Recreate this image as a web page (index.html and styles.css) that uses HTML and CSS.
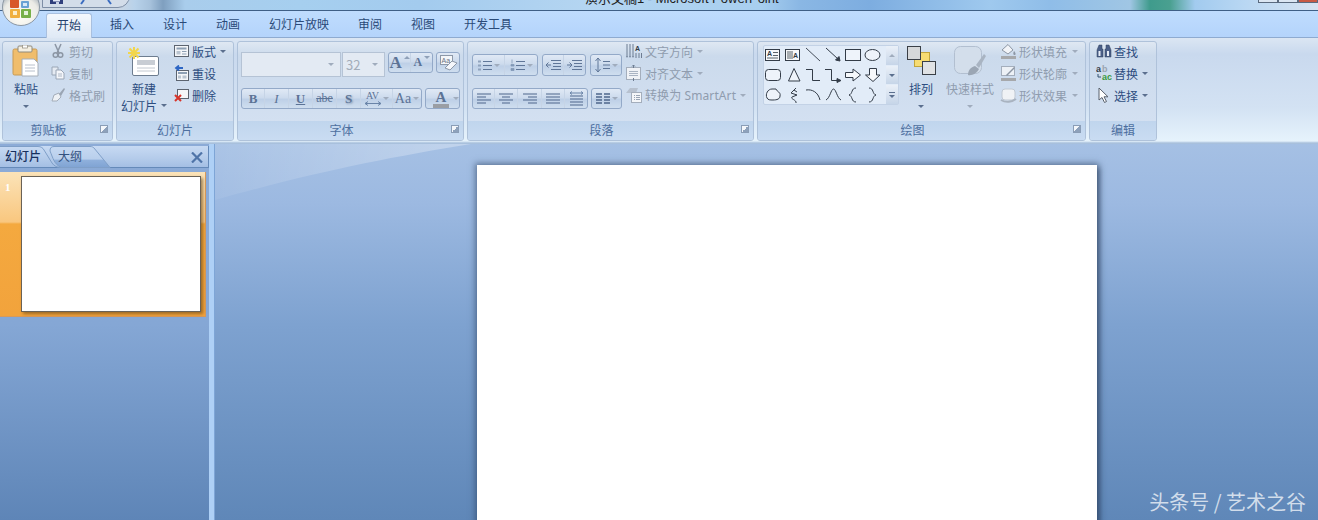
FILE: index.html
```html
<!DOCTYPE html>
<html lang="zh-CN">
<head>
<meta charset="utf-8">
<title>演示文稿1 - Microsoft PowerPoint</title>
<link rel="stylesheet" href="styles.css">
</head>
<body>
<div class="app">
  <header class="titlebar">
    <div class="qat">
      <svg class="qat-ico" width="66" height="6" viewBox="0 0 66 6"><rect x="0" y="0" width="13" height="4" fill="#2f3f7c"/><rect x="3" y="0" width="7" height="1.500" fill="#dfe6f4"/><rect x="6" y="2" width="3" height="2" fill="#c8d2e6"/><path d="M31 4 L34 0 M58 0 L61 4" stroke="#3a6cc0" stroke-width="2" fill="none"/></svg>
    </div>
    <div class="doc-title">演示文稿1 - Microsoft PowerPoint</div>
    <div class="winbtns"><i></i><i></i><i class="close"></i></div>
  </header>
  <svg class="orb" width="40" height="32" viewBox="0 0 40 32">
    <defs><radialGradient id="orbg" cx=".5" cy=".75" r=".7"><stop offset="0" stop-color="#fffdf6"/><stop offset=".7" stop-color="#ebebe6"/><stop offset="1" stop-color="#a3adb6"/></radialGradient></defs>
    <circle cx="20" cy="7" r="18.500" fill="url(#orbg)" stroke="#8b97a3"/>
    <rect x="9" y="-1" width="9" height="9" rx="1" fill="#d8582a"/>
    <rect x="20" y="1" width="8" height="7" rx="1" fill="#5a98d0" opacity=".9"/>
    <rect x="9" y="9" width="10" height="9" rx="1" fill="#f0b040"/>
    <rect x="20" y="9" width="10" height="9" rx="1" fill="#78b048"/>
    <rect x="12" y="11" width="4" height="4" fill="#fbeecb"/><rect x="23" y="11" width="4" height="4" fill="#e4f2d8"/><rect x="22" y="3" width="4" height="3" fill="#d8e8f6"/>
  </svg>
  <nav class="tabs">
    <span class="tab active">开始</span><span class="tab">插入</span><span class="tab">设计</span><span class="tab">动画</span><span class="tab">幻灯片放映</span><span class="tab">审阅</span><span class="tab">视图</span><span class="tab">开发工具</span>
  </nav>
  <section class="ribbon">
    <div class="group g1">
      <div class="gbody">
        <div class="big paste">
          <div class="big-ico"><svg width="28" height="32" viewBox="0 0 28 32"><rect x="1" y="4" width="24" height="26" rx="1.500" fill="#f0bd6c" stroke="#c79a55"/><rect x="6" y="1" width="14" height="6" rx="1" fill="#f4efe2" stroke="#8f8a7c"/><rect x="10.500" y="0" width="5" height="3" fill="#fff" stroke="#8f8a7c" stroke-width=".7"/><path d="M10 14 H22 L26 18 V31 H10Z" fill="#fff" stroke="#a6aeb8"/><path d="M13 20H23M13 23H23M13 26H23" stroke="#b8c0cc"/></svg></div>
          <span class="big-label">粘贴</span>
          <i class="caret"></i>
        </div>
        <div class="col">
          <div class="item off"><svg class="ic" width="14" height="16" viewBox="0 0 14 16"><path d="M4 1 L8 10 M10 1 L6 10" stroke="#8c96a4" stroke-width="1.500"/><circle cx="4.500" cy="12" r="2.300" fill="none" stroke="#8c96a4" stroke-width="1.500"/><circle cx="9.500" cy="12" r="2.300" fill="none" stroke="#8c96a4" stroke-width="1.500"/></svg><span>剪切</span></div>
          <div class="item off"><svg class="ic" width="14" height="16" viewBox="0 0 14 16"><path d="M1 2H7V10H1Z" fill="#e4eaf2" stroke="#9aa6b6"/><path d="M5 5H10L13 8V14H5Z" fill="#f4f6fa" stroke="#9aa6b6"/><path d="M7 9H11M7 11H11" stroke="#aeb8c6"/></svg><span>复制</span></div>
          <div class="item off"><svg class="ic" width="14" height="16" viewBox="0 0 14 16"><path d="M1 14 L3 8 L8 6 L10 10 L6 14Z" fill="#eef1f5" stroke="#a4adb9"/><path d="M8 7 L13 1 L14 2 L10 9Z" fill="#9aa5b3"/></svg><span>格式刷</span></div>
        </div>
      </div>
      <div class="glabel launch">剪贴板<i class="launcher"></i></div>
    </div>

    <div class="group g2">
      <div class="gbody">
        <div class="big newslide">
          <div class="big-ico"><svg width="32" height="30" viewBox="0 0 32 30"><rect x="4.500" y="9.500" width="26" height="19" rx="1.500" fill="#fff" stroke="#6d7d90"/><rect x="9" y="13" width="18" height="5" fill="#c8cdd4"/><path d="M9 21H27M9 24H27" stroke="#c2c8d0"/><path d="M6 0 V12 M0 6 H12 M1.500 1.500 L10.500 10.500 M10.500 1.500 L1.500 10.500" stroke="#f2d64c" stroke-width="2"/></svg></div>
          <span class="big-label">新建</span>
          <span class="big-label row">幻灯片<i class="caret cs"></i></span>
        </div>
        <div class="col">
          <div class="item on"><svg class="ic" width="15" height="16" viewBox="0 0 15 16"><rect x=".5" y="2.500" width="14" height="11" fill="#f4f6f9" stroke="#5c6470"/><rect x="2.500" y="4.500" width="10" height="2" fill="#8ea0b4"/><rect x="2.500" y="8" width="4" height="3.500" fill="#b9c4d0"/><path d="M8 8.500H12.500M8 11H12.500" stroke="#8ea0b4"/></svg><span>版式</span><i class="caret cs"></i></div>
          <div class="item on"><svg class="ic" width="15" height="16" viewBox="0 0 15 16"><rect x="2.500" y="5.500" width="12" height="10" fill="#f4f6f9" stroke="#5c6470"/><rect x="4" y="7" width="9" height="2" fill="#8ea0b4"/><rect x="4" y="10.500" width="3" height="3" fill="#b9c4d0"/><rect x="8.500" y="10.500" width="4" height="3" fill="#b9c4d0"/><path d="M9 3 H3 M5 .5 L2 3 L5 5.500" stroke="#2d66c4" stroke-width="1.800" fill="none"/></svg><span>重设</span></div>
          <div class="item on"><svg class="ic" width="15" height="16" viewBox="0 0 15 16"><rect x="3.500" y="2.500" width="11" height="9" fill="#f4f6f9" stroke="#5c6470"/><path d="M1 8 L7 14 M7 8 L1 14" stroke="#d8342a" stroke-width="2"/></svg><span>删除</span></div>
        </div>
      </div>
      <div class="glabel">幻灯片</div>
    </div>

    <div class="group g3">
      <div class="gbody rows font-rows">
        <div class="trow r1">
          <div class="combo face"><i class="caret pale"></i></div>
          <div class="combo size"><span>32</span><i class="caret pale"></i></div>
          <div class="tg grow"><span class="tb w23 glyph lg">A<sup class="up"></sup></span><span class="tb w21 glyph sm">A<sup class="down"></sup></span></div>
          <div class="tg clear"><svg width="22" height="18" viewBox="0 0 22 18"><rect x="3.500" y="1.500" width="12" height="9" fill="#f4f6f9" stroke="#8d98a8"/><text x="4.500" y="9" class="svgt">Aa</text><path d="M8 14 L15 7 L20 9 L13 16Z" fill="#f5f7fb" stroke="#8d98a8"/></svg></div>
        </div>
        <div class="trow r2">
          <div class="tg fmt">
            <span class="tb w23 glyph b">B</span><span class="tb w24 glyph i">I</span><span class="tb w24 glyph u">U</span><span class="tb w24 glyph st">abe</span><span class="tb w24 glyph s">S</span>
            <span class="tb w32 glyph av"><em>AV<svg width="16" height="5" viewBox="0 0 16 5"><path d="M0 2.500H16M3 .5 L0 2.500 L3 4.500M13 .5 L16 2.500 L13 4.500" stroke="#6a84a8" fill="none"/></svg></em><i class="caret pale"></i></span><span class="tb w28 glyph aa">Aa<i class="caret pale"></i></span>
          </div>
          <div class="tg color"><span class="colorA">A</span><i class="caret pale"></i></div>
        </div>
      </div>
      <div class="glabel launch">字体<i class="launcher"></i></div>
    </div>

    <div class="group g4">
      <div class="gbody para">
        <div class="rows para-rows">
          <div class="trow r1">
            <div class="tg bl">
              <span class="tb w32"><svg width="15" height="13" viewBox="0 0 15 13"><path d="M6 2.500H15M6 6.500H15M6 10.500H15" stroke="#5f7698"/><path d="M1 1.500h3v2h-3zM1 5.500h3v2h-3zM1 9.500h3v2h-3z" fill="#90a3bd"/></svg><i class="caret pale"></i></span>
              <span class="tb w32"><svg width="15" height="13" viewBox="0 0 15 13"><path d="M6 2.500H15M6 6.500H15M6 10.500H15" stroke="#5f7698"/><path d="M2 0.500V4.500M1 5.500h3v1.500h-3zM1 9.500h3v2h-3z" stroke="#8298b6" stroke-width=".8" fill="#8298b6"/></svg><i class="caret pale"></i></span>
            </div>
            <div class="tg indent">
              <span class="tb w21"><svg width="15" height="13" viewBox="0 0 15 13"><path d="M5 1.500H15M7 4.500H15M7 7.500H15M5 10.500H15" stroke="#5f7698"/><path d="M5 6H0M2.500 3.500 L0 6 L2.500 8.500" stroke="#5f7698" fill="none"/></svg></span>
              <span class="tb w21"><svg width="15" height="13" viewBox="0 0 15 13"><path d="M5 1.500H15M7 4.500H15M7 7.500H15M5 10.500H15" stroke="#5f7698"/><path d="M0 6H5M2.500 3.500 L5 6 L2.500 8.500" stroke="#5f7698" fill="none"/></svg></span>
            </div>
            <div class="tg spacing"><span class="tb w30"><svg width="15" height="16" viewBox="0 0 15 16"><path d="M3 1V15M.5 4 L3 1 L5.500 4M.5 12 L3 15 L5.500 12" stroke="#5f7698" fill="none"/><path d="M8 4.500H15M8 8H15M8 11.500H15" stroke="#5f7698"/></svg><i class="caret pale"></i></span></div>
          </div>
          <div class="trow r2b">
            <div class="tg align">
              <span class="tb w22"><svg width="14" height="11" viewBox="0 0 14 11"><path d="M0 1H14M0 4H9M0 7H14M0 10H9" stroke="#4f678c" stroke-width="1.200"/></svg></span>
              <span class="tb w23"><svg width="14" height="11" viewBox="0 0 14 11"><path d="M0 1H14M3 4H11M0 7H14M3 10H11" stroke="#4f678c" stroke-width="1.200"/></svg></span>
              <span class="tb w24"><svg width="14" height="11" viewBox="0 0 14 11"><path d="M0 1H14M5 4H14M0 7H14M5 10H14" stroke="#4f678c" stroke-width="1.200"/></svg></span>
              <span class="tb w23"><svg width="14" height="11" viewBox="0 0 14 11"><path d="M0 1H14M0 4H14M0 7H14M0 10H14" stroke="#4f678c" stroke-width="1.200"/></svg></span>
              <span class="tb w22"><svg width="15" height="15" viewBox="0 0 15 15"><path d="M1 5H14M1 8H14M1 11H14M1 14H14" stroke="#4f678c" stroke-width="1.200"/><path d="M1 2H14M3 .5 L1 2 L3 3.500M12 .5 L14 2 L12 3.500" stroke="#6a84a8" fill="none"/></svg></span>
            </div>
            <div class="tg cols"><span class="tb w29"><svg width="14" height="12" viewBox="0 0 14 12"><path d="M0 1H6M8 1H14M0 4H6M8 4H14M0 7H6M8 7H14M0 10H6M8 10H14" stroke="#4f678c" stroke-width="1.300"/></svg><i class="caret pale"></i></span></div>
          </div>
        </div>
        <div class="col para-col">
          <div class="item off"><svg class="ic" width="16" height="16" viewBox="0 0 16 16"><path d="M1 1V13M4 1V13M7 1V13" stroke="#6d7c92"/><path d="M1 15 L0 13H2ZM4 15 L3 13H5ZM7 15 L6 13H8Z" fill="#6d7c92"/><text x="9" y="8" class="svgt dark">A</text><path d="M10 10V15M13 10V15M15.500 10V15" stroke="#6d7c92"/></svg><span>文字方向</span><i class="caret pale gap"></i></div>
          <div class="item off"><svg class="ic" width="16" height="16" viewBox="0 0 16 16"><rect x=".5" y="2.500" width="14" height="12" fill="#f0f2f6" stroke="#a4aebc"/><path d="M3 6.500H12M3 8.500H12M3 10.500H12" stroke="#a9b3c2"/><path d="M7.500 0V3M6 1.500 L7.500 0 L9 1.500M7.500 13V16" stroke="#6d7c92" fill="none"/></svg><span>对齐文本</span><i class="caret pale gap"></i></div>
          <div class="item off"><svg class="ic" width="16" height="16" viewBox="0 0 16 16"><path d="M0 6 L4 1 H12 L10 6Z" fill="#b7c1cf"/><rect x="5.500" y="5.500" width="10" height="10" fill="#f4f6f9" stroke="#a4aebc"/><path d="M8 8.500h1M8 10.500h1M8 12.500h1M10 8.500h4M10 10.500h4M10 12.500h4" stroke="#9aa5b5"/></svg><span class="latin">转换为 SmartArt</span><i class="caret pale gap"></i></div>
        </div>
      </div>
      <div class="glabel launch">段落<i class="launcher"></i></div>
    </div>

    <div class="group g5">
      <div class="gbody draw">
        <div class="gallery">
          <svg width="122" height="58" viewBox="764 46 122 58" fill="none" stroke="#333c48">
            <rect x="765.500" y="49.500" width="14" height="11" fill="#f6f8fb"/><text x="767" y="56" class="svgt dark">A</text><path d="M773 52.500H778M773 55.500H778M767 58H778" stroke-width=".8"/>
            <rect x="785.500" y="49.500" width="14" height="11" fill="#f6f8fb"/><path d="M788 51V59M790 51V59M792 51V59" stroke-width=".8"/><text x="793" y="58" class="svgt dark">A</text>
            <path d="M806 48 L820 61" stroke-width=".9"/>
            <path d="M826 48 L838 59"/><path d="M840 61 L835.500 60 L839 56.500Z" fill="#333c48"/>
            <rect x="845.500" y="49.500" width="15" height="11" fill="#eef3fa"/>
            <ellipse cx="872.500" cy="55" rx="7.500" ry="5.500" fill="#eef3fa"/>
            <rect x="765.500" y="69.500" width="15" height="11" rx="3" fill="#eef3fa"/>
            <path d="M788.500 81 L794 68.500 L800 81Z" fill="#eef3fa"/>
            <path d="M806 69.500H812.500V80.500H820"/>
            <path d="M825 69.500H831.500V80.500H838"/><path d="M841 80.500 L837 78.500V82.500Z" fill="#333c48"/>
            <path d="M845.500 72.500H853V69L860.500 75 853 81V77.500H845.500Z" fill="#f6f8fb"/>
            <path d="M869.500 68.500H876.500V75H880L873 81.500 865.500 75H869.500Z" fill="#f6f8fb"/>
            <path d="M767 98 C765 94 768 89 772 89 L776 89 C777 92 781 92 780 96 C780 99 777 100 773 100 C770 100 768 100 767 98Z" fill="#eef3fa"/>
            <path d="M796 88 L791 93 L797 95 L792 97 C790 99 797 100 796 103 M794 90 L797 92"/>
            <path d="M806 90 C812 89 818 92 820 100"/>
            <path d="M826 100 C830 98 831 89 833.500 89 C836 89 837 98 841 100"/>
            <path d="M856 88 C851 88 853 94 849 95 C853 96 851 102 856 102"/>
            <path d="M869 88 C874 88 872 94 876 95 C872 96 874 102 869 102"/>
          </svg>
          <div class="gscroll">
            <span class="gs"><i class="caret upc"></i></span>
            <span class="gs"><i class="caret"></i></span>
            <span class="gs more"><i class="bar"></i><i class="caret"></i></span>
          </div>
        </div>
        <div class="big arrange">
          <div class="big-ico"><svg width="32" height="32" viewBox="-1 0 32 32"><rect x="8.500" y="7.500" width="15" height="14" fill="#f7dc72" stroke="#c2a53c"/><rect x="1.500" y="1.500" width="13" height="13" fill="#d6d8da" stroke="#3a3f46"/><rect x="16.500" y="16.500" width="13" height="13" fill="#e0e2e4" stroke="#3a3f46"/></svg></div>
          <span class="big-label dark">排列</span>
          <i class="caret"></i>
        </div>
        <div class="big quick off">
          <div class="big-ico"><svg width="32" height="32" viewBox="0 0 32 32"><rect x=".5" y="1.500" width="27" height="27" rx="6" fill="#d3deeb" stroke="#b2bfd0"/><path d="M14 30 C14 25 17 22 21 21 L25 24 C23 28 18 31 14 30Z" fill="#9ba6b4"/><path d="M22 20 L30 9 L32 11 L25 23Z" fill="#a9b4c2"/></svg></div>
          <span class="big-label">快速样式</span>
          <i class="caret pale"></i>
        </div>
        <div class="col shape-col">
          <div class="item off"><svg class="ic" width="17" height="16" viewBox="0 0 17 16"><path d="M2 7 L8 1.500 L13 7 L8 11Z" fill="#f2f4f8" stroke="#8c96a4"/><path d="M14 8 C16 10 16 12 14.500 12 C13 12 13 10 14 8Z" fill="#8c96a4"/><rect x="1" y="13" width="15" height="3" fill="#a6a8ab"/></svg><span>形状填充</span><i class="caret pale gap2"></i></div>
          <div class="item off"><svg class="ic" width="17" height="16" viewBox="0 0 17 16"><rect x="1.500" y="1.500" width="13" height="9" fill="#edf1f6" stroke="#a4aebc"/><path d="M6 10 L14 2 L15 3 L7 11Z" fill="#8c96a4"/><rect x="1" y="13" width="15" height="3" fill="#a6a8ab"/></svg><span>形状轮廓</span><i class="caret pale gap2"></i></div>
          <div class="item off"><svg class="ic" width="17" height="16" viewBox="0 0 17 16"><rect x="2" y="2" width="13" height="11" rx="3" fill="#f0f2f5" stroke="#c0c8d2"/><path d="M1 13 C6 16 12 15 16 12" stroke="#a9b3c0" stroke-width="2" fill="none"/></svg><span>形状效果</span><i class="caret pale gap2"></i></div>
        </div>
      </div>
      <div class="glabel launch">绘图<i class="launcher"></i></div>
    </div>

    <div class="group g6">
      <div class="gbody">
        <div class="col edit-col">
          <div class="item on"><svg class="ic" width="16" height="16" viewBox="0 0 16 16"><path d="M3 2H6V6H7V14H1V7Z M10 2H13L15 7V14H9V6H10Z" fill="#4a5f88" stroke="#33415f" stroke-width=".5"/><rect x="2.500" y="8" width="2" height="5" fill="#e6ecf6"/><rect x="11" y="8" width="2" height="5" fill="#e6ecf6"/></svg><span>查找</span></div>
          <div class="item on"><svg class="ic" width="16" height="16" viewBox="0 0 16 16"><text x="0" y="7" class="svgt dark big-t">a</text><text x="6" y="7" class="svgt grey big-t">b</text><text x="6" y="15" class="svgt green big-t">ac</text><path d="M2 9V12H5" stroke="#33506e" fill="none"/></svg><span>替换</span><i class="caret cs"></i></div>
          <div class="item on"><svg class="ic" width="16" height="16" viewBox="0 0 16 16"><path d="M3 1V13L6 10.500 8.500 15.500 10.500 14.500 8 9.800H12Z" fill="#fff" stroke="#58606c"/></svg><span>选择</span><i class="caret cs"></i></div>
        </div>
      </div>
      <div class="glabel">编辑</div>
    </div>
  </section>
  <main class="work">
    <aside class="side">
      <div class="side-head">
        <svg class="side-tabs" width="112" height="22" viewBox="0 0 112 22"><defs><linearGradient id="t2" x1="0" y1="0" x2="0" y2="1"><stop offset="0" stop-color="#c6d9f2"/><stop offset=".6" stop-color="#b9cfec"/><stop offset=".65" stop-color="#8fb0dc"/><stop offset="1" stop-color="#7fa3d3"/></linearGradient></defs><path d="M50 5 C53 12 54 18 61 21.500 H110 L94 2 C93 1 92 .5 90 .5 H54 C51 .5 50 2 50 5Z" fill="url(#t2)" stroke="#7f9fc8"/><path d="M0 .5 H38 C41 .5 43 2 44 4 L52 17 C54 20 57 21.500 61 21.500" fill="none" stroke="#7f9fc8"/></svg>
        <span class="stab active">幻灯片</span><span class="stab">大纲</span>
        <svg class="side-x" width="12" height="11" viewBox="0 0 12 11"><path d="M1 .5 L11 10.500 M11 .5 L1 10.500" stroke="#4f74a8" stroke-width="2.200"/></svg>
      </div>
      <div class="thumb-row">
        <span class="thumb-num">1</span>
        <div class="thumb"></div>
      </div>
    </aside>
    <div class="split"></div>
    <div class="stage">
      <svg class="swoosh" width="260" height="60" viewBox="0 0 260 60"><defs><linearGradient id="sw" x1="0" y1="0" x2="1" y2="0"><stop offset="0" stop-color="#fff" stop-opacity=".06"/><stop offset="1" stop-color="#fff" stop-opacity=".32"/></linearGradient></defs><path d="M0 0 H256 C170 14 100 28 0 56Z" fill="url(#sw)"/></svg>
      <div class="slide"></div>
      <div class="watermark">头条号 / 艺术之谷</div>
    </div>
  </main>
</div>
</body>
</html>
```

FILE: styles.css
```css
* { box-sizing: border-box; }
html, body { margin: 0; padding: 0; }
body { font-family: "Noto Sans CJK SC", "Noto Sans", sans-serif; font-size: 12px; overflow: hidden; }
i, em { font-style: normal; }

.app { position: relative; width: 1318px; height: 520px; display: flex; flex-direction: column; overflow: hidden; background: #6f94c4; }

/* title bar */
.titlebar {
  position: relative; height: 11px; flex: none; overflow: hidden; border-bottom: 1px solid #3f5f86;
  background: linear-gradient(90deg, #d5dde6 0, #c9d6e4 120px, #b8d2ea 135px, #a7c2dc 150px, #7f9fbf 163px, #a9cdec 185px, #a6cfef 300px, #a3cbee 420px, #b4d5f1 585px, #a8cfef 760px, #8ab7e4 800px, #7dade0 870px, #9fc9ee 990px, #8fbde8 1050px, #a0c6e4 1130px, #3f9b8c 1150px, #4aa090 1170px, #a2cbef 1195px, #b9d7f3 1245px, #d7e3f0 1318px);
}
.qat { position: absolute; left: 42px; top: -6px; width: 88px; height: 14px; border: 1px solid #7d8ea6; border-radius: 0 0 12px 0; background: #d3dde9; padding: 5px 0 0 7px; }
.qat-ico { display: block; }
.doc-title { position: absolute; left: 585px; top: -10px; line-height: 17px; font-family: "Liberation Sans", "Noto Sans CJK SC", sans-serif; font-size: 13px; color: #1d1d1d; white-space: nowrap; }
.winbtns { position: absolute; right: 0; top: 0; display: flex; }
.winbtns i { width: 20px; height: 3px; border: 1px solid #5a6a7e; border-top: 0; background: #dbe6f2; }
.winbtns i.close { background: #c85a44; }
.orb { position: absolute; left: 1px; top: 0; z-index: 3; }

/* tabs */
.tabs { height: 27px; flex: none; display: flex; align-items: flex-end; gap: 7px; padding-left: 46px; background: linear-gradient(#bfdcfe, #b4d4fb); border-bottom: 1px solid #8eabd0; position: relative; }
.tab { padding: 0 11px; height: 24px; line-height: 21px; color: #2a4a78; }
.tab.active { background: linear-gradient(#f4f8fd, #dfe9f5); border: 1px solid #a9c0df; border-bottom: 0; border-radius: 3px 3px 0 0; padding: 0 10px; margin-bottom: -1px; height: 25px; line-height: 21px; color: #23406c; }

/* ribbon */
.ribbon { height: 106px; flex: none; display: flex; gap: 3px; padding: 3px 0 0 2px; background: linear-gradient(#dbe6f3 0, #c9d9ee 16px, #d3e2f3 70px, #e6f3fc 103px, #a8c0dc 105px); }
.group { display: flex; flex-direction: column; height: 100px; border: 1px solid #afc2da; border-radius: 3px; background: linear-gradient(#dfe8f3 0, #cbdaec 14px, #d3e0f1 80px); color: #2d4d80; }
.g1 { width: 111px; } .g2 { width: 118px; } .g3 { width: 227px; } .g4 { width: 287px; } .g5 { width: 329px; } .g6 { width: 68px; }
.gbody { height: 79px; flex: none; display: flex; }
.glabel { position: relative; height: 19px; line-height: 17px; text-align: center; background: linear-gradient(#c0d5ed, #c9dcf2); color: #4d6f9f; border-radius: 0 0 2px 2px; }
.glabel.launch { padding-right: 18px; }
.launcher { position: absolute; right: 4px; top: 4px; width: 8px; height: 8px; border: 1px solid #8a9db6; background: linear-gradient(135deg, #f3f6fa 50%, #8da1bb 50%); }

/* stacked buttons */
.big { display: flex; flex-direction: column; align-items: center; }
.big-ico { height: 35px; display: flex; align-items: flex-end; justify-content: center; }
.big-label { line-height: 17px; margin-top: 0; white-space: nowrap; }
.big-ico + .big-label { margin-top: 3px; }
.big-label.row { display: flex; align-items: center; }
.big > .caret { margin-top: 8px; }
.paste { width: 46px; }
.newslide { width: 50px; margin-left: 2px; }
.col { display: flex; flex-direction: column; margin-top: -2px; }
.item { height: 22px; display: flex; align-items: center; white-space: nowrap; }
.item .ic { flex: none; margin-right: 3px; }
.on { color: #2d4d80; }
.off, .off .big-label { color: #8f9cae; }
.g1 .col { margin-left: 2px; }
.g1 .ic { margin-right: 4px; }
.g2 .col { margin-left: 5px; }
.caret { display: inline-block; width: 0; height: 0; border: 3px solid transparent; border-bottom: 0; border-top: 3px solid #5b6f8e; }
.caret.pale { border-top-color: #a0acbd; }
.caret.cs { margin-left: 4px; }
.caret.gap { margin-left: 4px; }
.caret.gap2 { margin-left: 5px; }
.caret.upc { border-top: 0; border-bottom: 3px solid #a0acbd; }

/* tool groups */
.rows { display: flex; flex-direction: column; }
.trow { display: flex; }
.font-rows { flex-direction: column; padding: 10px 0 0 3px; }
.font-rows .r1 { height: 36px; align-items: flex-start; }
.font-rows .r2 { gap: 3px; }
.combo { height: 25px; border: 1px solid #b5c3d5; background: #e3eaf3; display: flex; align-items: center; justify-content: flex-end; padding-right: 6px; color: #a2acb9; font-size: 13px; }
.combo.face { width: 100px; margin-right: 1px; }
.combo.size { width: 43px; margin-right: 3px; justify-content: space-between; padding-left: 3px; }
.tg { display: flex; height: 21px; border: 1px solid #93a9c8; border-radius: 3px; background: linear-gradient(#e0e9f5 0, #cddbed 45%, #bed0e7 55%, #cfdeef 100%); }
.tb { display: flex; align-items: center; justify-content: center; gap: 2px; border-right: 1px solid #c6d4e6; height: 100%; }
.tb:last-child { border-right: 0; }
.w21 { width: 21px; } .w22 { width: 22px; } .w23 { width: 23px; } .w24 { width: 24px; } .w28 { width: 28px; } .w29 { width: 29px; } .w30 { width: 30px; } .w32 { width: 32px; }
.glyph { font-family: "Liberation Serif", serif; color: #5c7396; font-weight: 700; font-size: 13px; }
.glyph.lg { font-size: 17px; } .glyph.sm { font-size: 12px; }
.glyph sup { width: 0; height: 0; border: 3px solid transparent; border-top: 0; border-bottom: 3px solid #8fa0b8; margin: -10px 0 0 0; }
.glyph sup.down { border-bottom: 0; border-top: 3px solid #8fa0b8; }
.glyph.i { font-style: italic; font-weight: 400; }
.glyph.u { text-decoration: underline; }
.glyph.st { text-decoration: line-through; font-weight: 400; font-size: 12px; }
.glyph.s { text-shadow: 1px 1px 2px #8093ad; }
.glyph.av em { display: flex; flex-direction: column; align-items: center; font-size: 10px; line-height: 10px; font-weight: 400; }
.glyph.aa { font-weight: 400; font-size: 14px; }
.clear { width: 24px; margin-left: 3px; align-items: center; justify-content: center; }
.grow { width: 45px; }
.color { width: 35px; align-items: center; padding-left: 7px; gap: 4px; }
.colorA { font-family: "Liberation Serif", serif; font-weight: 700; font-size: 15px; line-height: 14px; color: #5c7396; border-bottom: 4px solid #9a9ea4; width: 16px; text-align: center; }
.svgt { font-family: "Liberation Sans", sans-serif; font-size: 7px; fill: #6a7484; stroke: none; }
.svgt.dark { fill: #333c48; font-weight: 700; }
.svgt.grey { fill: #9aa4b0; font-weight: 700; }
.svgt.green { fill: #3a9a40; font-weight: 700; }
.svgt.big-t { font-size: 9px; }
.para { padding-left: 4px; }
.para-rows { padding-top: 12px; width: 155px; }
.para-rows .r1 { gap: 4px; height: 34px; }
.para-rows .r1 .tg { height: 22px; }
.r2b { gap: 3px; }
.para-col { margin-left: -1px; }
.para-col .ic { margin-right: 3px; }
.latin { font-family: "Noto Sans", "Noto Sans CJK SC", sans-serif; letter-spacing: .1px; }

/* gallery */
.draw { padding: 3px 0 0 5px; }
.gallery { display: flex; width: 136px; height: 60px; border: 1px solid #c3d2e6; border-radius: 2px; background: #e2ecf8; margin-right: 6px; }
.gallery > svg { display: block; flex: none; }
.gscroll { width: 13px; display: flex; flex-direction: column; gap: 1px; }
.gs { flex: 1; display: flex; flex-direction: column; align-items: center; justify-content: center; gap: 2px; background: linear-gradient(#eaf0f8, #c6d5e8); }
.gs .bar { width: 6px; height: 1px; background: #5b6f8e; }
.arrange { width: 32px; margin: -3px 0 0 0; }
.arrange .dark { color: #2d4d80; }
.quick { width: 48px; margin: -3px 0 0 9px; }
.shape-col { margin: -5px 0 0 6px; }
.shape-col .ic { margin-right: 2px; }
.edit-col { margin-left: 6px; }
.edit-col .ic { margin-right: 2px; }

/* work area */
.work { flex: 1; min-height: 0; display: flex; }
.side { width: 209px; flex: none; padding-top: 2px; background: linear-gradient(#8cabd7 0, #85a7d5 180px, #5e85b7 376px); }
.side-head { position: relative; height: 22px; display: flex; align-items: center; padding-left: 5px; background: linear-gradient(#c7daf3, #b4cbea 60%, #a4bfe4); border-bottom: 1px solid #658ab9; border-right: 1px solid #658ab9; }
.side-tabs { position: absolute; left: 0; top: 0; }
.stab { position: relative; color: #34527f; line-height: 17px; margin-top: -3px; }
.stab.active { color: #17305e; font-weight: 500; width: 53px; }
.side-x { position: absolute; right: 5px; top: 6px; }
.thumb-row { position: relative; width: 206px; height: 145px; margin-top: 4px; padding: 4px 5px 5px 21px; border: 1px solid #d89a5a; border-width: 0 1px 1px 0; background: linear-gradient(#fbe3b8 0, #f9c77f 50px, #f4a93f 52px, #f2a33c 100%); }
.thumb { width: 180px; height: 136px; background: #fff; border: 1px solid #6a6256; box-shadow: 2px 2px 3px rgba(90, 60, 20, .55); }
.thumb-num { position: absolute; left: 5px; top: 9px; color: #fff; font: 700 11px "Liberation Serif", serif; }
.split { width: 6px; flex: none; background: #aed0f6; border-right: 1px solid #7ea5d6; }
.stage { position: relative; flex: 1; min-width: 0; padding: 21px 0 0 262px; background: linear-gradient(#a5c0e4 0, #9cb9e1 60px, #7ea2d0 180px, #5f87b8 376px); overflow: hidden; }
.swoosh { position: absolute; left: 0; top: 0; }
.slide { position: relative; width: 620px; height: 400px; background: #fff; box-shadow: 0 0 6px 2px rgba(40, 60, 90, .5), 3px 3px 5px rgba(40, 60, 90, .5); }
.watermark { position: absolute; right: 12px; bottom: 3px; font-size: 20px; line-height: 30px; color: rgba(255, 255, 255, .72); white-space: nowrap; }
```
